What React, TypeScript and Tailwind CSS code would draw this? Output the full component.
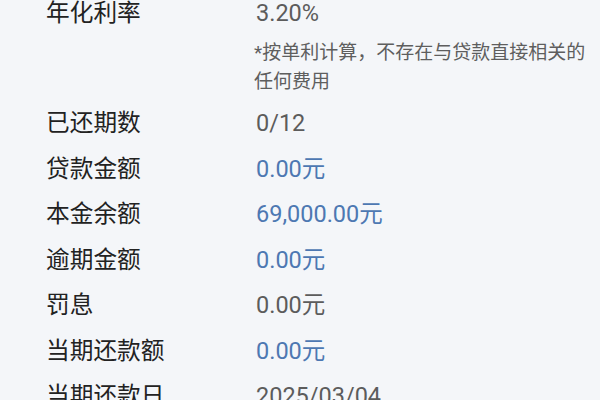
import React from "react";

const rows: { label: string; value: string; blue?: boolean }[] = [
  { label: "已还期数", value: "0/12" },
  { label: "贷款金额", value: "0.00元", blue: true },
  { label: "本金余额", value: "69,000.00元", blue: true },
  { label: "逾期金额", value: "0.00元", blue: true },
  { label: "罚息", value: "0.00元" },
  { label: "当期还款额", value: "0.00元", blue: true },
  { label: "当期还款日", value: "2025/03/04" },
];

const font = { fontFamily: "Roboto, 'Noto Sans CJK SC', sans-serif" };

export default function App() {
  return (
    <div
      className="w-[600px] h-[400px] overflow-hidden bg-[#f4f6f9] pl-[46px]"
      style={font}
    >
      <div className="flex h-[26px] items-center leading-[26px]">
        <div className="w-[210px] text-[23.7px] leading-[26px] text-[#222222]">年化利率</div>
        <div className="text-[23.5px] leading-[26px] text-[#5c5c5c]">3.20%</div>
      </div>
      <div className="mt-[11.5px] ml-[208px] text-[19px] leading-[29px] text-[#5e5e5e]">
        <div>*按单利计算，不存在与贷款直接相关的</div>
        <div>任何费用</div>
      </div>
      <div className="mt-[5.75px] flex flex-col">
        {rows.map((r) => (
          <div key={r.label} className="flex h-[45.5px] items-center">
            <div className="w-[210px] text-[23.7px] text-[#222222]">{r.label}</div>
            <div
              className={
                r.blue
                  ? "text-[23.5px] text-[#4d78b2]"
                  : "text-[23.5px] text-[#5c5c5c]"
              }
            >
              {r.value}
            </div>
          </div>
        ))}
      </div>
    </div>
  );
}
